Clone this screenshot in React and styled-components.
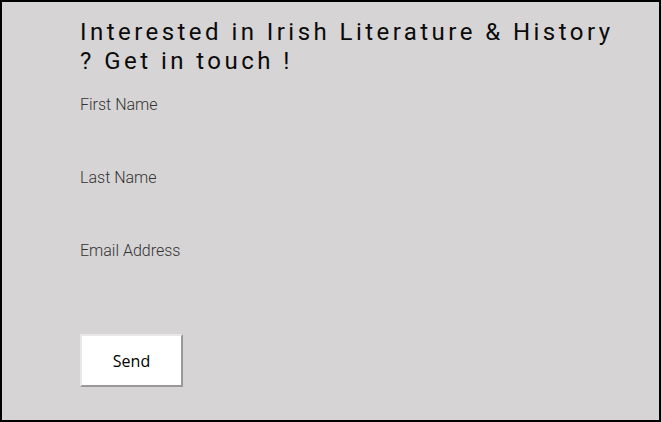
import styled, { createGlobalStyle } from "styled-components";

const GlobalStyle = createGlobalStyle`
  html, body {
    margin: 0;
    padding: 0;
  }
  * {
    box-sizing: border-box;
  }
`;

const App = () => {
  return (
    <>
      <GlobalStyle />
      <Container>
        <Title>Interested in Irish Literature &amp; History ? Get in touch !</Title>
        <Form>
          <Field>
            <Label htmlFor="first">First Name</Label>
            <Input id="first" type="text" />
          </Field>
          <Field>
            <Label htmlFor="last">Last Name</Label>
            <Input id="last" type="text" />
          </Field>
          <Field>
            <Label htmlFor="email">Email Address</Label>
            <Input id="email" type="email" />
          </Field>
          <Button>Send</Button>
        </Form>
      </Container>
    </>
  );
};

export default App;

const Container = styled.div`
  width: 661px;
  height: 422px;
  background-color: #d6d4d5;
  border: 2px solid #000;
  padding: 16px 0 0 78px;
`;

const Title = styled.h1`
  margin: 0;
  width: 545px;
  font-family: Roboto, "Liberation Sans", sans-serif;
  font-weight: 400;
  font-size: 24px;
  line-height: 29px;
  letter-spacing: 3.45px;
  color: #0a0a0a;
`;

const Form = styled.div`
  margin-top: 19px;
  display: flex;
  flex-direction: column;
`;

const Field = styled.div`
  display: flex;
  flex-direction: column;
  height: 73px;
`;

const Label = styled.label`
  font-family: Roboto, "Liberation Sans", sans-serif;
  font-weight: 300;
  font-size: 16px;
  line-height: 19px;
  color: #333;
`;

const Input = styled.input`
  background: transparent;
  border: none;
  outline: none;
  height: 30px;
  width: 300px;
  padding: 0;
  font-size: 16px;
`;

const Button = styled.button`
  margin-top: 20px;
  width: 103px;
  height: 53px;
  background-color: #fff;
  border: 2px solid;
  border-color: #e8e8e8 #999 #999 #e8e8e8;
  font-family: "Open Sans", "Liberation Sans", sans-serif;
  font-size: 16px;
  color: #000;
  padding: 0;
`;
